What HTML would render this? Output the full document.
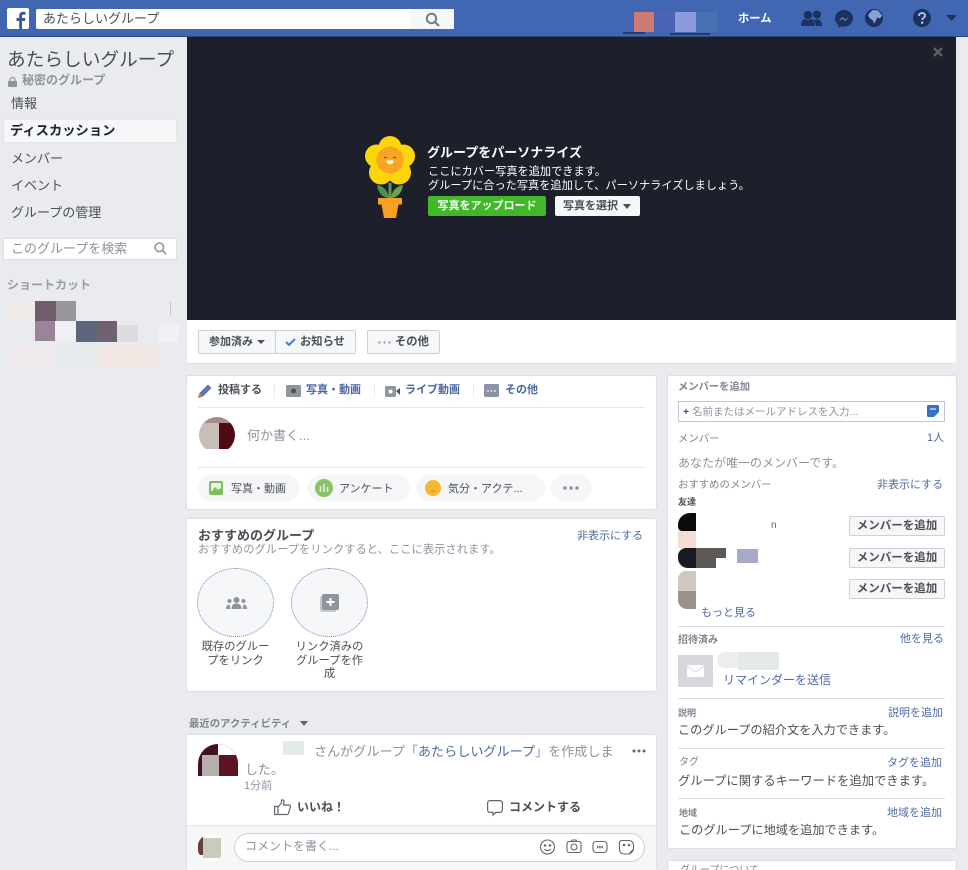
<!DOCTYPE html>
<html lang="ja"><head><meta charset="utf-8"><title>あたらしいグループ</title>
<style>
html,body{margin:0;padding:0;width:968px;height:870px;overflow:hidden;background:#e9ebee;font-family:"Liberation Sans","Noto Sans CJK JP",sans-serif;color:#1d2129}
body{position:relative}
.a{position:absolute}
.t{position:absolute;white-space:nowrap;line-height:16px;font-size:12px}
.b{font-weight:bold}
.card{position:absolute;background:#fff;border:1px solid #dddfe2;border-radius:3px;box-sizing:border-box}
.btn{position:absolute;box-sizing:border-box;background:#f6f7f9;border:1px solid #ced0d4;border-radius:2px;font-size:11.300px;font-weight:bold;color:#4b4f56;line-height:23px;text-align:center;white-space:nowrap}
.link{color:#4f6aa3}
.grey{color:#8d949e}
.hr{position:absolute;height:1px;background:#dadde1}
.pill{position:absolute;background:#f5f6f7;border-radius:13px;height:26px}
svg{position:absolute;overflow:visible}
</style></head><body>

<!-- top bar -->
<div class="a" style="left:0;top:0;width:968px;height:37px;background:#4267b2;border-bottom:1px solid #29487d;box-sizing:border-box"></div>
<div class="a" style="left:7px;top:8px;width:22px;height:21px;background:#fff;border-radius:2px"></div>
<svg style="left:7px;top:8px" width="22" height="21"><path d="M15 21v-8h3l.4-3H15V8.200c0-1 .4-1.600 1.600-1.600h2V4c-.5-.1-1.400-.2-2.400-.2-2.500 0-4 1.500-4 4.100V10H9.500v3h2.700v8z" fill="#3b5998"/></svg>
<div class="a" style="left:36px;top:9px;width:418px;height:20px;background:#fff;border-radius:2px 0 0 2px"></div>
<div class="a" style="left:411px;top:9px;width:43px;height:20px;background:#f6f7f9"></div>
<div class="t" style="left:43px;top:10px;font-size:13px;line-height:18px;color:#4b4f56">あたらしいグループ</div>
<svg style="left:425px;top:12px" width="15" height="15" fill="none" stroke="#6f7d90" stroke-width="2"><circle cx="6.500" cy="6.500" r="4.700"/><path d="M10 10l4 4"/></svg>
<div class="a" style="left:624px;top:12px;width:10px;height:20px;background:#4567b2"></div>
<div class="a" style="left:634px;top:12px;width:20px;height:20px;background:#cd7b74"></div>
<div class="a" style="left:654px;top:12px;width:21px;height:20px;background:#4965b4"></div>
<div class="a" style="left:675px;top:12px;width:21px;height:20px;background:#8b9bdc"></div>
<div class="a" style="left:696px;top:12px;width:22px;height:20px;background:#4570b4"></div>
<div class="a" style="left:623px;top:32px;width:22px;height:2px;background:#2a3a66"></div>
<div class="a" style="left:670px;top:33px;width:40px;height:2px;background:#2a3a66"></div>
<div class="t b" style="left:738px;top:11px;color:#fff;font-size:11.300px">ホーム</div>
<svg style="left:801px;top:10px" width="22" height="17" fill="#1c3160"><circle cx="7" cy="5" r="4.300"/><circle cx="16" cy="4.500" r="4"/><path d="M0 16c0-4 2-6.500 4-7 2 1.500 4 1.500 6 0 2 .5 4 3 4 7z"/><path d="M11 9c2 1 4 1 5.500 0 2.500.5 4.500 3 4.500 7h-6c0-3-1.500-5.500-4-7z"/></svg>
<svg style="left:835px;top:10px" width="18" height="18"><path d="M9 0C4 0 0 3.700 0 8.300c0 2.600 1.300 4.900 3.300 6.400V18l3-1.700c.9.300 1.800.4 2.700.4 5 0 9-3.700 9-8.400S14 0 9 0z" fill="#1c3160"/><path d="M3.500 11l4-4 2.300 2.200L14 7l-4 4-2.300-2.200z" fill="#6c8ac8"/></svg>
<svg style="left:865px;top:9px" width="18" height="18"><circle cx="9" cy="9" r="9" fill="#1c3160"/><path d="M8 1l5 .5 4 5-2 3-3-1-1 3-2 3-1-3-3-2-2-3 2-3z" fill="#8aa2d2"/></svg>
<svg style="left:913px;top:9px" width="18" height="18"><circle cx="9" cy="9" r="9" fill="#1c3160"/><path d="M6 7c0-2 1.300-3 3-3s3 1 3 2.500c0 2.300-2.800 2.200-2.800 4.500" fill="none" stroke="#a9bcdf" stroke-width="2"/><rect x="8" y="12.500" width="2.300" height="2.300" fill="#a9bcdf"/></svg>
<svg style="left:946px;top:15px" width="11" height="6"><path d="M0 0h11L5.500 6z" fill="#1c3160"/></svg>

<!-- sidebar -->
<div class="t" style="left:7px;top:48px;font-size:18.700px;line-height:24px;color:#4b4f56">あたらしいグループ</div>
<svg style="left:8px;top:77px" width="9" height="10"><rect y="4" width="9" height="6" rx="1" fill="#90949c"/><path d="M2 4V3a2.500 2.500 0 0 1 5 0v1" fill="none" stroke="#90949c" stroke-width="1.200"/></svg>
<div class="t b" style="left:22px;top:72px;color:#90949c">秘密のグループ</div>
<div class="t" style="left:11px;top:96px;font-size:13px;color:#4b4f56">情報</div>
<div class="a" style="left:3px;top:119px;width:174px;height:24px;background:#f6f7f9;border:1px solid #e4e6ea;box-sizing:border-box;border-radius:2px"></div>
<div class="t b" style="left:10px;top:123px;font-size:13.300px;color:#1d2129">ディスカッション</div>
<div class="t" style="left:11px;top:151px;font-size:13px;color:#4b4f56">メンバー</div>
<div class="t" style="left:11px;top:178px;font-size:13px;color:#4b4f56">イベント</div>
<div class="t" style="left:11px;top:205px;font-size:13px;color:#4b4f56">グループの管理</div>
<div class="a" style="left:3px;top:238px;width:174px;height:22px;background:#fff;border:1px solid #dddfe2;box-sizing:border-box"></div>
<div class="t" style="left:11px;top:240px;font-size:13px;line-height:17px;color:#8d949e">このグループを検索</div>
<svg style="left:154px;top:242px" width="13" height="13" fill="none" stroke="#90949c" stroke-width="1.600"><circle cx="5.300" cy="5.300" r="4.300"/><path d="M8.500 8.500l3.700 3.700"/></svg>
<div class="t b" style="left:7px;top:277px;color:#9a9ea6;font-size:12px">ショートカット</div>
<div class="a" style="left:8px;top:301px;width:27px;height:20px;background:#f0eae8"></div>
<div class="a" style="left:35px;top:301px;width:21px;height:20px;background:#6f5e69"></div>
<div class="a" style="left:56px;top:301px;width:20px;height:20px;background:#97969c"></div>
<div class="a" style="left:35px;top:321px;width:20px;height:20px;background:#9a8499"></div>
<div class="a" style="left:55px;top:321px;width:21px;height:20px;background:#eef0f1"></div>
<div class="a" style="left:76px;top:321px;width:21px;height:21px;background:#5e667c"></div>
<div class="a" style="left:97px;top:321px;width:20px;height:21px;background:#6f6170"></div>
<div class="a" style="left:117px;top:325px;width:21px;height:17px;background:#dcdddf"></div>
<div class="a" style="left:159px;top:325px;width:20px;height:17px;background:#f0f1f7"></div>
<div class="a" style="left:8px;top:345px;width:50px;height:22px;background:#efe8ed"></div>
<div class="a" style="left:58px;top:345px;width:40px;height:22px;background:#e6ecee"></div>
<div class="a" style="left:98px;top:345px;width:60px;height:22px;background:#f0e6e2"></div>
<div class="a" style="left:170px;top:302px;width:1px;height:13px;background:#c4c6ca"></div>

<!-- cover -->
<div class="a" style="left:187px;top:37px;width:769px;height:283px;background:#1d202a"></div>
<div class="a" style="left:187px;top:320px;width:769px;height:44px;background:#fff;border-bottom:1px solid #dddfe2;border-radius:0 0 3px 3px;box-sizing:border-box"></div>
<svg style="left:933px;top:47px" width="10" height="10" stroke="#5c6068" stroke-width="2.400"><path d="M1 1l8 8M9 1L1 9"/></svg>

<!-- flower -->
<svg style="left:364px;top:136px" width="52" height="84">
<path d="M26 47v16" stroke="#5c9a4c" stroke-width="3"/>
<path d="M25 62C19 62 14 57 13 49c6 1 11 5 12 13z" fill="#4f8f52"/>
<path d="M27 62c6 0 11-5 12-13-6 1-11 5-12 13z" fill="#6ba34c"/>
<g fill="#fdd60a"><circle cx="26" cy="11.500" r="11.500"/><circle cx="39.500" cy="20" r="11.500"/><circle cx="35" cy="36.500" r="12"/><circle cx="17" cy="36.500" r="12"/><circle cx="12.500" cy="20" r="11.500"/><circle cx="26" cy="24" r="15"/></g>
<circle cx="26" cy="24" r="13.500" fill="#f6a623"/>
<path d="M20 21.500h3M29 21.500h3" stroke="#7a5a20" stroke-width="1.200"/>
<path d="M22.500 24.500h7c0 2.500-1.500 3.700-3.500 3.700s-3.500-1.200-3.500-3.700z" fill="#fff"/>
<path d="M14 62h24v6.500h-3.500L32 82H20l-2.500-13.500H14z" fill="#f8a01f"/>
</svg>
<div class="t b" style="left:427px;top:145px;font-size:13px;color:#fff">グループをパーソナライズ</div>
<div class="t" style="left:428px;top:165px;font-size:11.200px;line-height:14px;color:#fff">ここにカバー写真を追加できます。</div>
<div class="t" style="left:428px;top:179px;font-size:11.200px;line-height:14px;color:#fff">グループに合った写真を追加して、パーソナライズしましょう。</div>
<div class="a b" style="left:428px;top:196px;width:118px;height:20px;background:#42b72a;border-radius:2px;color:#fff;font-size:11px;line-height:20px;text-align:center;font-weight:bold">写真をアップロード</div>
<div class="a b" style="left:555px;top:196px;width:85px;height:20px;background:#f6f7f9;border-radius:2px;color:#4b4f56;font-size:11px;line-height:20px;font-weight:bold;padding-left:8px;box-sizing:border-box">写真を選択</div>
<svg style="left:623px;top:204px" width="8" height="5"><path d="M0 0h8L4 5z" fill="#4b4f56"/></svg>

<!-- action buttons -->
<div class="btn" style="left:198px;top:330px;width:78px;height:24px;text-align:left;padding-left:10px;font-size:11px">参加済み</div>
<svg style="left:257px;top:340px" width="8" height="4"><path d="M0 0h8L4 4z" fill="#4b4f56"/></svg>
<div class="btn" style="left:275px;top:330px;width:81px;height:24px;text-align:left;padding-left:24px">お知らせ</div>
<svg style="left:285px;top:338px" width="11" height="9" fill="none" stroke="#4b7bd5" stroke-width="2"><path d="M1 4l3 3 6-6"/></svg>
<div class="btn" style="left:367px;top:330px;width:73px;height:24px;text-align:left;padding-left:27px">その他</div>
<svg style="left:378px;top:341px" width="13" height="3" fill="#90949c"><circle cx="1.500" cy="1.500" r="1.100"/><circle cx="6.500" cy="1.500" r="1.100"/><circle cx="11.500" cy="1.500" r="1.100"/></svg>

<!-- composer -->
<div class="card" style="left:186px;top:375px;width:471px;height:135px"></div>
<svg style="left:198px;top:383px" width="15" height="15"><path d="M0 15l1.500-5L10 1.500 13.500 5 5 13.500z" fill="#5b76b4"/><path d="M0 15l1.500-5L5 13.500z" fill="#d0785f"/></svg>
<div class="t b" style="left:218px;top:382px;font-size:11px;color:#4b4f56">投稿する</div>
<div class="a" style="left:274px;top:384px;width:1px;height:14px;background:#e9ebee"></div>
<svg style="left:286px;top:384px" width="15" height="13"><rect y="1" width="15" height="12" rx="1.500" fill="#90949c"/><circle cx="7.500" cy="7" r="2.500" fill="#4b4f56"/></svg>
<div class="t b" style="left:306px;top:382px;font-size:11px;color:#4b67a1">写真・動画</div>
<div class="a" style="left:374px;top:384px;width:1px;height:14px;background:#e9ebee"></div>
<svg style="left:385px;top:385px" width="15" height="12"><rect y="1" width="11" height="11" rx="1.500" fill="#90949c"/><circle cx="5.500" cy="6.500" r="2" fill="#fff"/><path d="M11 6l4-3v7z" fill="#4b4f56"/></svg>
<div class="t b" style="left:405px;top:382px;font-size:11px;color:#4b67a1">ライブ動画</div>
<div class="a" style="left:473px;top:384px;width:1px;height:14px;background:#e9ebee"></div>
<svg style="left:484px;top:384px" width="15" height="13"><rect width="15" height="13" rx="1.500" fill="#8c93a8"/><g fill="#dfe1e8"><circle cx="4" cy="7" r="1"/><circle cx="7.500" cy="7" r="1"/><circle cx="11" cy="7" r="1"/></g></svg>
<div class="t b" style="left:505px;top:382px;font-size:11px;color:#4b67a1">その他</div>
<div class="hr" style="left:198px;top:407px;width:447px;background:#e5e6e9"></div>
<svg style="left:198px;top:417px" width="38" height="36"><defs><clipPath id="c1"><circle cx="19" cy="18" r="18"/></clipPath></defs><g clip-path="url(#c1)"><rect width="38" height="36" fill="#fff"/><rect x="21" y="6" width="17" height="26" fill="#4f0a16"/><rect y="6" width="21" height="26" fill="#c9bdb8"/><rect y="0" width="38" height="6" fill="#6a3c42" opacity=".6"/></g></svg>
<div class="t" style="left:247px;top:428px;font-size:13px;color:#8d949e">何か書く...</div>
<div class="hr" style="left:198px;top:467px;width:447px;background:#e5e6e9"></div>
<div class="pill" style="left:198px;top:475px;width:102px"></div>
<svg style="left:209px;top:481px" width="14" height="14"><rect width="14" height="14" rx="2" fill="#7ebb5d"/><rect x="2" y="2" width="10" height="9" fill="#eaf3e4"/><path d="M2 11l4-5 3 3 3-2v4z" fill="#7ebb5d"/></svg>
<div class="t" style="left:231px;top:481px;font-size:11px;color:#4b4f56">写真・動画</div>
<div class="pill" style="left:307px;top:475px;width:103px"></div>
<svg style="left:315px;top:479px" width="18" height="18"><circle cx="9" cy="9" r="9" fill="#8bc265"/><path d="M5.500 7v6M9 5v8M12.500 8v5" stroke="#fff" stroke-width="1.600" opacity=".75"/></svg>
<div class="t" style="left:339px;top:481px;font-size:11px;color:#4b4f56">アンケート</div>
<div class="pill" style="left:416px;top:475px;width:129px"></div>
<svg style="left:425px;top:480px" width="16" height="16"><circle cx="8" cy="8" r="8" fill="#f7b733"/><path d="M5 6.500h1M10 6.500h1M6 11h4" stroke="#c98a1c" stroke-width="1"/></svg>
<div class="t" style="left:448px;top:481px;font-size:11px;color:#4b4f56">気分・アクテ...</div>
<div class="pill" style="left:551px;top:475px;width:41px"></div>
<svg style="left:563px;top:486px" width="16" height="4" fill="#90949c"><circle cx="2" cy="2" r="1.800"/><circle cx="8" cy="2" r="1.800"/><circle cx="14" cy="2" r="1.800"/></svg>

<!-- recommended groups -->
<div class="card" style="left:186px;top:518px;width:471px;height:174px"></div>
<div class="t b" style="left:198px;top:528px;font-size:13px;color:#4b4f56">おすすめのグループ</div>
<div class="t" style="left:198px;top:542px;font-size:11.300px;color:#8d949e">おすすめのグループをリンクすると、ここに表示されます。</div>
<div class="t link" style="left:577px;top:528px;font-size:11px">非表示にする</div>
<div class="a" style="left:197px;top:568px;width:77px;height:69px;background:#f6f7f9;border:1px dotted #6f82b3;border-radius:50%;box-sizing:border-box"></div>
<div class="a" style="left:291px;top:568px;width:77px;height:69px;background:#f6f7f9;border:1px dotted #6f82b3;border-radius:50%;box-sizing:border-box"></div>
<svg style="left:226px;top:597px" width="21" height="12" fill="#90949c"><circle cx="10.500" cy="3" r="3"/><path d="M5.500 12c0-4 2-5.500 5-5.500s5 1.500 5 5.500z"/><circle cx="3.500" cy="4" r="2"/><path d="M0 12c0-3 1.500-4.500 3.500-4.500L4.500 12z"/><circle cx="17.500" cy="4" r="2"/><path d="M21 12c0-3-1.500-4.500-3.500-4.500L16.500 12z"/></svg>
<svg style="left:320px;top:594px" width="19" height="18"><rect y="2" width="16" height="16" rx="2" fill="#c4c7cc"/><rect x="2" width="17" height="16" rx="2" fill="#90949c"/><path d="M10.500 4v8M6.500 8h8" stroke="#fff" stroke-width="2"/></svg>
<div class="a" style="left:190px;top:641px;width:91px;text-align:center;font-size:11.300px;line-height:13.500px;color:#4b4f56">既存のグルー<br>プをリンク</div>
<div class="a" style="left:284px;top:641px;width:91px;text-align:center;font-size:11.300px;line-height:13.500px;color:#4b4f56">リンク済みの<br>グループを作<br>成</div>

<!-- recent activity -->
<div class="t" style="left:189px;top:717px;font-size:10.400px;color:#7f8590;font-weight:bold">最近のアクティビティ</div>
<svg style="left:300px;top:721px" width="8" height="5"><path d="M0 0h8L4 5z" fill="#606770"/></svg>
<div class="card" style="left:186px;top:734px;width:471px;height:136px;border-bottom:0"></div>
<svg style="left:198px;top:744px" width="40" height="32"><defs><clipPath id="c2"><path d="M0 20a20 20 0 0 1 40 0v12H0z"/></clipPath></defs><g clip-path="url(#c2)"><rect width="40" height="32" fill="#43121e"/><rect x="20" width="20" height="11" fill="#fff"/><rect y="11" x="4" width="17" height="21" fill="#b7afae"/><rect x="21" y="11" width="19" height="21" fill="#5d1422"/></g></svg>
<div class="a" style="left:283px;top:741px;width:21px;height:14px;background:#e4e9ea"></div>
<div class="t" style="left:314px;top:744px;font-size:13.100px;color:#8d949e">さんがグループ「<span class="link">あたらしいグループ</span>」を作成しま</div>
<div class="t" style="left:245px;top:762px;font-size:13px;color:#8d949e">した。</div>
<div class="t" style="left:244px;top:778px;font-size:11px;color:#8d949e">1分前</div>
<svg style="left:632px;top:749px" width="14" height="4" fill="#606770"><circle cx="2" cy="2" r="1.500"/><circle cx="7" cy="2" r="1.500"/><circle cx="12" cy="2" r="1.500"/></svg>
<svg style="left:274px;top:799px" width="17" height="16" fill="none" stroke="#606770" stroke-width="1.200"><path d="M.6 7.500h3.400v8H.6zM4 8l3.500-4V1.500c0-1.200 2.500-1 2.500 1.200L9.500 6h5.500c1.500 0 1.700 1.500 1.200 2.500l-1.700 6c-.2.700-.8 1-1.500 1H4"/></svg>
<div class="t b" style="left:297px;top:799px;font-size:12px;color:#4b4f56">いいね！</div>
<svg style="left:487px;top:800px" width="16" height="16" fill="none" stroke="#606770" stroke-width="1.200"><path d="M3 .6h10A2.400 2.400 0 0 1 15.400 3v7a2.400 2.400 0 0 1-2.400 2.400H9L6 15v-2.600H3A2.400 2.400 0 0 1 .6 10V3A2.400 2.400 0 0 1 3 .6z"/></svg>
<div class="t b" style="left:509px;top:799px;font-size:12px;color:#4b4f56">コメントする</div>
<div class="a" style="left:187px;top:825px;width:469px;height:45px;background:#f6f7f9;border-top:1px solid #e5e6e9;box-sizing:border-box"></div>
<svg style="left:198px;top:834px" width="26" height="27"><defs><clipPath id="c3"><circle cx="13" cy="13.500" r="13.500"/></clipPath></defs><g clip-path="url(#c3)"><rect width="26" height="27" fill="#fff"/><rect y="3" x="0" width="5" height="18" fill="#6a3c42"/><rect y="4" x="5" width="18" height="20" fill="#c8ccbb"/></g></svg>
<div class="a" style="left:234px;top:833px;width:411px;height:29px;background:#fff;border:1px solid #ccd0d5;border-radius:15px;box-sizing:border-box"></div>
<div class="t" style="left:245px;top:838px;font-size:12px;color:#8d949e">コメントを書く...</div>
<svg style="left:540px;top:839px" width="100" height="16" fill="none" stroke="#606770" stroke-width="1.100"><circle cx="7.500" cy="8" r="7"/><circle cx="5" cy="6.500" r=".7"/><circle cx="10" cy="6.500" r=".7"/><path d="M4.500 10c1.500 2 4.500 2 6 0"/><rect x="27" y="2.500" width="14" height="11" rx="2"/><circle cx="34" cy="8" r="3"/><path d="M31 2.500l1-1.500h4l1 1.500"/><rect x="53" y="2.500" width="14" height="11" rx="3"/><path d="M57 8h6" stroke-width="2.400" stroke-dasharray="1.400 .8"/><path d="M81 1.500h8a4.500 4.500 0 0 1 4.500 4.500v3a6 6 0 0 1-6 6H84A4.500 4.500 0 0 1 79.500 10.500V3zM89 15l4.500-5"/><circle cx="84" cy="6" r=".7"/><circle cx="89" cy="6" r=".7"/></svg>

<!-- right column -->
<div class="card" style="left:667px;top:375px;width:290px;height:474px"></div>
<div class="t" style="left:678px;top:380px;font-size:10.300px;color:#7f8590;font-weight:bold">メンバーを追加</div>
<div class="a" style="left:678px;top:401px;width:267px;height:21px;background:#fff;border:1px solid #bdc7d8;box-sizing:border-box"></div>
<div class="t" style="left:683px;top:404px;font-size:10.500px;color:#8d949e"><b style="color:#4b4f56">+</b> 名前またはメールアドレスを入力...</div>
<svg style="left:927px;top:405px" width="12" height="12"><path d="M1.500 0h9A1.500 1.500 0 0 1 12 1.500V7L7 12H1.500A1.500 1.500 0 0 1 0 10.500v-9A1.500 1.500 0 0 1 1.500 0z" fill="#3b6fc4"/><path d="M3 4h6" stroke="#fff"/></svg>
<div class="t" style="left:678px;top:432px;font-size:10.400px;color:#7f8590">メンバー</div>
<div class="t" style="left:927px;top:430px;font-size:11px;color:#4f6aa3">1人</div>
<div class="t" style="left:678px;top:455px;font-size:12px;color:#8d949e">あなたが唯一のメンバーです。</div>
<div class="t" style="left:678px;top:478px;font-size:10.400px;color:#7f8590">おすすめのメンバー</div>
<div class="t link" style="left:877px;top:477px;font-size:11px">非表示にする</div>
<div class="t b" style="left:678px;top:494px;font-size:9px;color:#4b4f56">友達</div>
<div class="a" style="left:678px;top:513px;width:18px;height:18px;background:#0d0a0d;border-radius:12px 0 0 4px"></div>
<div class="a" style="left:678px;top:531px;width:18px;height:17px;background:#f3dcd2"></div>
<div class="a" style="left:678px;top:548px;width:18px;height:20px;background:#1a1a22;border-radius:8px 0 0 10px"></div>
<div class="a" style="left:696px;top:548px;width:20px;height:20px;background:#5e5954"></div>
<div class="a" style="left:716px;top:548px;width:10px;height:10px;background:#5e5954"></div>
<div class="a" style="left:737px;top:549px;width:21px;height:14px;background:#a7a9c9"></div>
<div class="a" style="left:678px;top:571px;width:18px;height:20px;background:#cec9c0;border-radius:8px 0 0 0"></div>
<div class="a" style="left:678px;top:591px;width:18px;height:18px;background:#98938f;border-radius:0 0 0 9px"></div>
<div class="t" style="left:771px;top:518px;font-size:10px;color:#606770">n</div>
<div class="btn" style="left:849px;top:516px;width:96px;height:20px;line-height:19px;font-size:11.500px">メンバーを追加</div>
<div class="btn" style="left:849px;top:548px;width:96px;height:20px;line-height:19px;font-size:11.500px">メンバーを追加</div>
<div class="btn" style="left:849px;top:579px;width:96px;height:20px;line-height:19px;font-size:11.500px">メンバーを追加</div>
<div class="t link" style="left:701px;top:605px;font-size:11px">もっと見る</div>
<div class="hr" style="left:678px;top:626px;width:267px"></div>
<div class="t" style="left:678px;top:633px;font-size:10px;color:#7f8590;font-weight:bold">招待済み</div>
<div class="t link" style="left:900px;top:631px;font-size:11px">他を見る</div>
<div class="a" style="left:678px;top:655px;width:35px;height:32px;background:#d6d7da"></div>
<svg style="left:687px;top:665px" width="17" height="12"><rect width="17" height="12" rx="1" fill="#fff"/><path d="M0 1l8.500 6L17 1" fill="none" stroke="#d6d7da"/></svg>
<div class="a" style="left:717px;top:652px;width:21px;height:16px;background:#ededee;border-radius:8px 0 0 8px"></div>
<div class="a" style="left:738px;top:652px;width:41px;height:18px;background:#e4e8e8"></div>
<div class="t link" style="left:723px;top:672px;font-size:12px">リマインダーを送信</div>
<div class="hr" style="left:678px;top:698px;width:267px"></div>
<div class="t" style="left:678px;top:705px;font-size:9px;color:#7f8590;font-weight:bold">説明</div>
<div class="t link" style="left:888px;top:705px;font-size:11px">説明を追加</div>
<div class="t" style="left:678px;top:722px;font-size:12.200px;color:#4b4f56">このグループの紹介文を入力できます。</div>
<div class="hr" style="left:678px;top:748px;width:267px"></div>
<div class="t" style="left:679px;top:755px;font-size:10px;color:#7f8590">タグ</div>
<div class="t link" style="left:887px;top:755px;font-size:11px">タグを追加</div>
<div class="t" style="left:678px;top:773px;font-size:12.300px;color:#4b4f56">グループに関するキーワードを追加できます。</div>
<div class="hr" style="left:678px;top:798px;width:267px"></div>
<div class="t" style="left:679px;top:805px;font-size:9px;color:#7f8590;font-weight:bold">地域</div>
<div class="t link" style="left:887px;top:805px;font-size:11px">地域を追加</div>
<div class="t" style="left:679px;top:822px;font-size:12.200px;color:#4b4f56">このグループに地域を追加できます。</div>
<div class="card" style="left:667px;top:860px;width:290px;height:10px;border-bottom:0"></div>
<div class="a" style="left:667px;top:860px;width:290px;height:10px;overflow:hidden"><div class="t" style="left:13px;top:3px;font-size:10px;color:#7f8590">グループについて</div></div>

</body></html>
